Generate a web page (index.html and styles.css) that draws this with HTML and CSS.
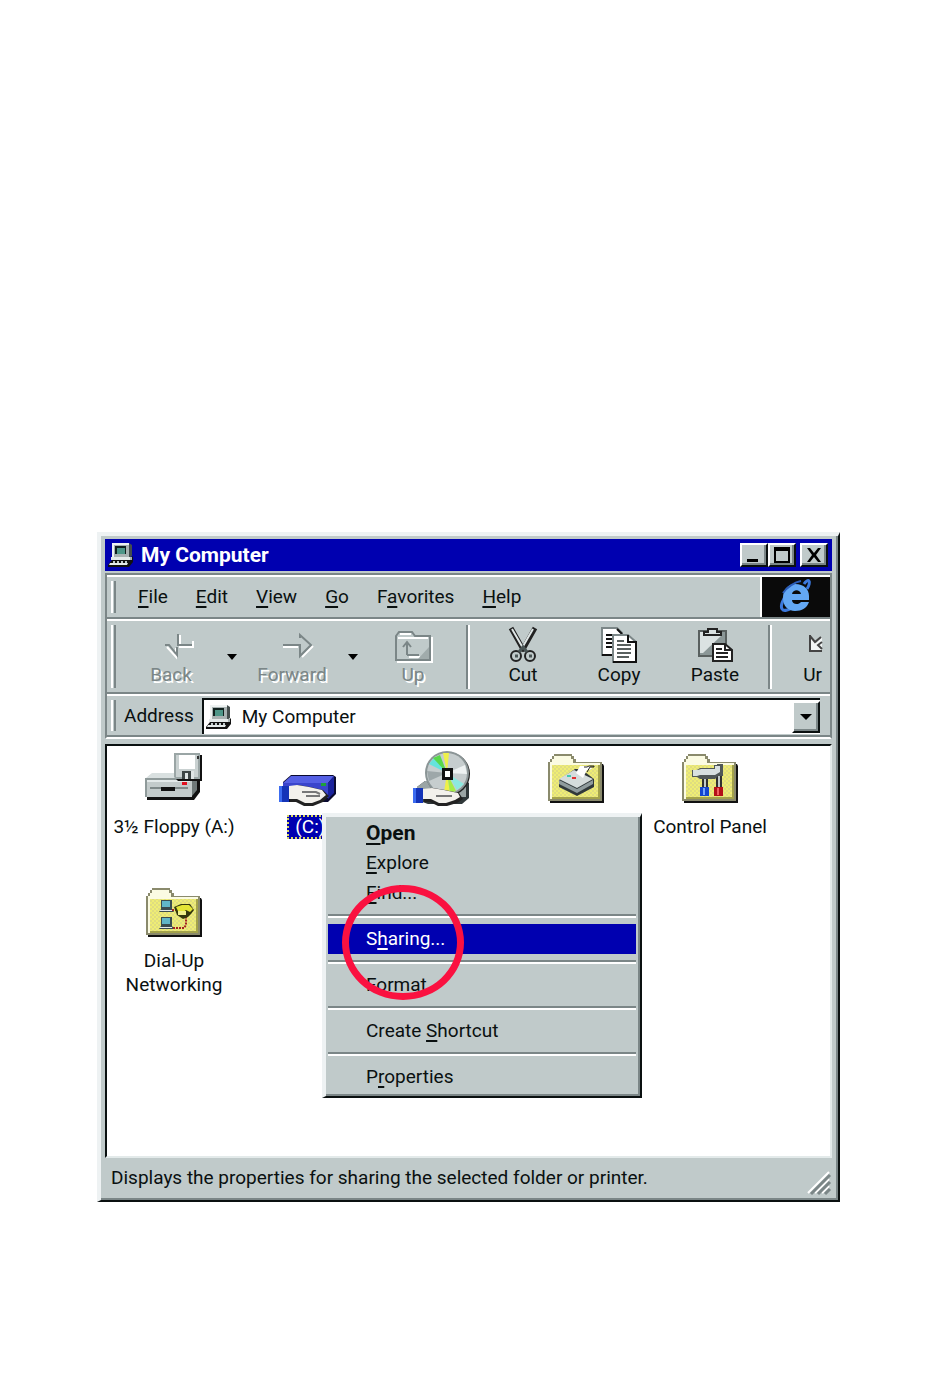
FILE: index.html
```
<!DOCTYPE html>
<html lang="en">
<head>
    <meta charset="UTF-8">
    <meta name="viewport" content="width=device-width, initial-scale=1.0">
    <title>My Computer</title>
    <link rel="stylesheet" href="styles.css">
</head>
<body>
    <svg class="symbols" aria-hidden="true">
        <symbol id="computer" viewBox="0 0 26 26">
            <path d="M5 1h16l3 2v11l-3 2H5z" fill="#444d4d"/>
            <path d="M4 1h17v14H4z" fill="#eef2f2"/>
            <path d="M6 3h15v12H6z" fill="#a8b2b2"/>
            <path d="M7 4h11v8H7z" fill="#10201e"/>
            <path d="M9 6h8v6H9z" fill="#4d9688"/>
            <path d="M4 16h19l2-2v6l-4 5H0v-2l4-5z" fill="#111"/>
            <path d="M3 15h20v3H3z" fill="#e4eaea"/>
            <path d="M22 15h2v3h-2z" fill="#a8b2b2"/>
            <path d="M2 21h18l-1 2H1z" fill="#e4eaea"/>
            <path d="M5 19h2v2H5zM9 19h2v2H9zM13 19h2v2h-2zM17 19h2v2h-2z" fill="#c0caca"/>
        </symbol>
        <symbol id="folder" viewBox="0 0 60 54">
            <path d="M4 51v-3h50V12h3l1 2v37z" fill="#111"/>
            <path d="M2 49V10h2V7h2V4h2V2h18v2h2v3h2v3h26v39z" fill="#8a8a6c"/>
            <path d="M4 47V10h2V7h2V4h17v3h2v4h27v36z" fill="#fbfbe2"/>
            <path d="M6 13h48v34H6z" fill="#a3a24a"/>
            <path d="M6 13h46v32H6z" fill="url(#dither)"/>
        </symbol>
        <pattern id="dither" width="4" height="4" patternUnits="userSpaceOnUse">
            <path d="M0 0h4v4H0z" fill="#efed74"/>
            <path d="M0 0h2v2H0zM2 2h2v2H2z" fill="#dfdd80"/>
        </pattern>
    </svg>

    <main class="window">
        <header class="title-bar">
            <svg class="small-icon"><use href="#computer"/></svg>
            <h1>My Computer</h1>
            <div class="title-buttons">
                <button class="raised" aria-label="Minimize"><svg viewBox="0 0 18 18"><path d="M2 13h11v3H2z"/></svg></button>
                <button class="raised" aria-label="Maximize"><svg viewBox="0 0 18 18"><path d="M1 1h16v16H1zM3 5v10h12V5z" fill-rule="evenodd"/></svg></button>
                <button class="raised close" aria-label="Close"><svg viewBox="0 0 18 18"><path d="M2 2h3l4 5 4-5h3l-5 7 5 7h-3l-4-5-4 5H2l5-7z"/></svg></button>
            </div>
        </header>

        <div class="bars">
            <div class="band menu-band">
                <span class="grip"></span>
                <nav class="menu-bar">
                    <button><u>F</u>ile</button>
                    <button><u>E</u>dit</button>
                    <button><u>V</u>iew</button>
                    <button><u>G</u>o</button>
                    <button>F<u>a</u>vorites</button>
                    <button><u>H</u>elp</button>
                </nav>
                <div class="logo">
                    <svg viewBox="0 0 34 36">
                        <path d="M25 5c2-3 4-4 5-3s0 5-2 8M8 15C4 20 1 27 3 30s6 1 10-1" fill="none" stroke="#3b78dc" stroke-width="3"/>
                        <path d="M16 5c9 0 14 5 14 12v4H13c0 5 7 5 9 2h8c-2 6-7 9-14 9C9 32 4 27 4 19S9 5 16 5zm-3 10h9c-1-5-8-5-9 0z" fill="#63a8f4" fill-rule="evenodd"/>
                        <path d="M4 14C8 8 16 3 22 2" fill="none" stroke="#2a5cb8" stroke-width="2"/>
                    </svg>
                </div>
            </div>

            <div class="band tool-band">
                <span class="grip"></span>
                <div class="tools">
                    <button class="tool" disabled>
                        <svg viewBox="0 0 36 36">
                            <path d="M27 8v12h13v-6M14 20l9 10v-9" fill="none" stroke="#fff" stroke-width="2"/>
                            <path d="M25 7v11h14M12 18h4l8 10v-8" fill="none" stroke="#7b8687" stroke-width="2"/>
                        </svg>
                        <span>Back</span>
                    </button>
                    <button class="drop" disabled aria-label="Back history"><svg viewBox="0 0 10 6"><path d="M0 0h10L5 6z"/></svg></button>
                    <button class="tool" disabled>
                        <svg viewBox="0 0 36 36">
                            <path d="M9 20h15M28 30l11-11" fill="none" stroke="#fff" stroke-width="2"/>
                            <path d="M9 18h17v11l11-11L26 8v3" fill="none" stroke="#7b8687" stroke-width="2"/>
                        </svg>
                        <span>Forward</span>
                    </button>
                    <button class="drop" disabled aria-label="Forward history"><svg viewBox="0 0 10 6"><path d="M0 0h10L5 6z"/></svg></button>
                    <button class="tool" disabled>
                        <svg viewBox="0 0 36 36">
                            <path d="M2 35h35V10" fill="none" stroke="#fff" stroke-width="2"/>
                            <path d="M1 33V9l3-4h13l3 4h15v24zM12 28V16M8 20l4-5 4 5M12 28h12" fill="none" stroke="#7b8687" stroke-width="2"/>
                            <path d="M3 11h30M14 30h11M5 7h11" stroke="#fff" stroke-width="2"/>
                            <path d="M34 20v12H23z" fill="#a0abab"/>
                        </svg>
                        <span>Up</span>
                    </button>
                    <span class="divider"></span>
                    <button class="tool">
                        <svg viewBox="0 0 36 36">
                            <path d="M6 1l13 23M30 1L17 24" stroke="#222" stroke-width="5"/>
                            <path d="M7 2l11 19M28 2L17 21" stroke="#dfe6e6" stroke-width="2"/>
                            <circle cx="11" cy="29" r="5" fill="#c0caca" stroke="#222" stroke-width="2"/>
                            <circle cx="25" cy="29" r="5" fill="#c0caca" stroke="#222" stroke-width="2"/>
                            <path d="M14 25l4-5 4 5M10 29h3M24 29h3" fill="none" stroke="#4a5555" stroke-width="3"/>
                        </svg>
                        <span>Cut</span>
                    </button>
                    <button class="tool">
                        <svg viewBox="0 0 36 36">
                            <path d="M1 1h15l5 5v22H1z" fill="#fff" stroke="#7b8687" stroke-width="2"/>
                            <path d="M5 8h6M5 12h6M5 16h6M5 20h6" stroke="#111" stroke-width="2"/>
                            <path d="M16 2l5 5M1 28h11" fill="none" stroke="#111" stroke-width="2"/>
                            <path d="M12 8h15l8 7v20H12z" fill="#fff" stroke="#7b8687" stroke-width="2"/>
                            <path d="M27 8v7h8v20H12" fill="none" stroke="#111" stroke-width="2"/>
                            <path d="M16 14h7M16 18h14M16 22h14M16 26h14M16 30h12" stroke="#59605f" stroke-width="2"/>
                        </svg>
                        <span>Copy</span>
                    </button>
                    <button class="tool">
                        <svg viewBox="0 0 36 36">
                            <path d="M2 4h27v25H2z" fill="#8b9797" stroke="#59605f" stroke-width="2"/>
                            <path d="M3 5h22v3L6 26H3z" fill="#dbe2e2"/>
                            <path d="M7 8h17V5h-4V2h-9v3H7z" fill="#d9e0e0" stroke="#222" stroke-width="2"/>
                            <path d="M16 17h12l7 6v11H16z" fill="#fff" stroke="#222" stroke-width="2"/>
                            <path d="M28 17v6h7M19 22h6M19 26h12M19 30h12" fill="none" stroke="#222" stroke-width="2"/>
                        </svg>
                        <span>Paste</span>
                    </button>
                    <span class="divider"></span>
                    <button class="tool partial">
                        <svg viewBox="0 0 14 36">
                            <path d="M2 9l6 7 6-6v15H2z" fill="#f2f5f5"/>
                            <path d="M2 8v16h12M2 9l5 6 6-5M14 15l-4 3 4 4" fill="none" stroke="#444" stroke-width="2"/>
                        </svg>
                        <span>Ur</span>
                    </button>
                </div>
            </div>

            <div class="band address-band">
                <span class="grip"></span>
                <label for="address">Address</label>
                <div class="address">
                    <svg class="small-icon"><use href="#computer"/></svg>
                    <select id="address">
                        <option>My Computer</option>
                    </select>
                    <span class="raised arrow"><svg viewBox="0 0 12 6"><path d="M0 0h12L6 6z"/></svg></span>
                </div>
            </div>
        </div>

        <section class="files">
            <a class="file" href="#">
                <svg viewBox="0 0 60 54">
                    <path d="M3 48V26l6-5h44l3 3v16l-6 8H3z" fill="#111"/>
                    <path d="M2 26l6-5h44l-5 5z" fill="#d9e0e0"/>
                    <path d="M2 26h46v19H2z" fill="#c3cbcb"/>
                    <path d="M48 26l5-5v17l-5 6z" fill="#6f7979"/>
                    <path d="M1 26h47v2H3v17H1z" fill="#8f9a9a"/>
                    <path d="M3 28h43v2H3z" fill="#e4eaea"/>
                    <path d="M6 35h38v2H6z" fill="#7f8989"/>
                    <path d="M17 35h14v4H17z" fill="#111"/>
                    <path d="M32 3h26v26H34l-2-2z" fill="#111"/>
                    <path d="M30 1h26v26H32l-2-2z" fill="#9aa5a5"/>
                    <path d="M32 3h22v22H32z" fill="#c9d1d1"/>
                    <path d="M35 3h16v14H35z" fill="#fff"/>
                    <path d="M38 19h12v8H38z" fill="#3d4545"/>
                    <path d="M41 21h3v6h-3zM47 19h3v8h-3z" fill="#dfe5e5"/>
                    <path d="M53 4h2v3h-2z" fill="#333"/>
                    <path d="M38 30h5v3h-5z" fill="#e01020"/>
                </svg>
                <span>3½ Floppy (A:)</span>
            </a>
            <a class="file selected" href="#">
                <svg viewBox="0 0 60 54">
                    <path d="M5 46V30l8-7h42l3 2v17l-8 8H10z" fill="#0a0a30"/>
                    <path d="M5 31l8-7h43l-6 7z" fill="#5560e4"/>
                    <path d="M5 31h45v15H5z" fill="#3a45cc"/>
                    <path d="M50 31l6-7v17l-6 6z" fill="#1a229c"/>
                    <path d="M43 31h5v3h-5z" fill="#1ea03c"/>
                    <path d="M12 35l8-2 12 2 13 3 6 6-6 6-10 4h-9l-8-4h-6z" fill="#222"/>
                    <path d="M11 34l8-1 12 2 13 3 4 5-6 5-8 3h-7l-8-4h-8z" fill="#f3f1ec"/>
                    <path d="M24 40h14l4 2M28 44h14" fill="none" stroke="#777" stroke-width="2"/>
                    <path d="M1 34h10v16H1z" fill="#1434b8"/>
                    <path d="M1 34h3v16H1z" fill="#3c6cf0"/>
                </svg>
                <span>&nbsp;(C:)</span>
            </a>
            <a class="file" href="#">
                <svg viewBox="0 0 60 54">
                    <path d="M5 48V35l8-6h40l4 2v15l-7 6H16z" fill="#30383a"/>
                    <path d="M5 35l8-6h41v16H5z" fill="#9ba5a5"/>
                    <circle cx="36" cy="22" r="22" fill="#222"/>
                    <circle cx="35" cy="21" r="22" fill="#8b9596"/>
                    <circle cx="35" cy="21" r="20" fill="#c6cdce"/>
                    <path d="M35 21L17 12l6-7z" fill="#66e3dc"/>
                    <path d="M35 21L21 6l7-3z" fill="#58d84b"/>
                    <path d="M35 21L31 1h6z" fill="#eef04a"/>
                    <path d="M35 21l18-8 2 9z" fill="#eef2f2"/>
                    <path d="M35 21l3 20-6-1z" fill="#eef04a"/>
                    <path d="M35 21l9 18-6 2z" fill="#a4ec48"/>
                    <path d="M35 21l17 11-7 6z" fill="#8ce9df"/>
                    <path d="M35 21l-18 8-2-10z" fill="#9da7a9"/>
                    <path d="M30 16h11v12H30z" fill="#111"/>
                    <path d="M33 19h5v6h-5z" fill="#fff"/>
                    <path d="M12 38l9-2 12 2 14 3 4 6-6 4-10 3h-9l-8-4h-6z" fill="#222"/>
                    <path d="M11 37l9-1 12 2 14 3 2 4-5 3-9 3h-7l-8-4h-8z" fill="#f3f1ec"/>
                    <path d="M24 44h16" stroke="#777" stroke-width="2"/>
                    <path d="M1 36h10v15H1z" fill="#1434b8"/>
                    <path d="M1 36h3v15H1z" fill="#3c6cf0"/>
                </svg>
                <span>(D:)</span>
            </a>
            <a class="file" href="#">
                <svg viewBox="0 0 60 54">
                    <use href="#folder"/>
                    <path d="M13 28l16-11h6l13 10v8L31 44 13 35z" fill="#30383a"/>
                    <path d="M13 27l15-9 19 9-16 9z" fill="#d5dcdc"/>
                    <path d="M13 28l18 9v4l-18-9zM31 37l16-9v4l-16 9z" fill="#8f9b9d"/>
                    <path d="M30 21l4-7h10l2 3-5 1-4 8z" fill="#fff"/>
                    <path d="M38 15h3l2-1h5v1h-4l-3 5" fill="none" stroke="#222"/>
                    <path d="M21 23h4v2h-4z" fill="#42c9b0"/>
                    <path d="M26 25h4v2h-4z" fill="#e03030"/>
                </svg>
                <span>Printers</span>
            </a>
            <a class="file" href="#">
                <svg viewBox="0 0 60 54">
                    <use href="#folder"/>
                    <path d="M22 24h6v14h-6zM36 24h6v14h-6z" fill="#303030"/>
                    <path d="M24 24h2v12h-2zM38 24h2v12h-2z" fill="#c3cbcb"/>
                    <path d="M12 18h5l3-2h14v-3h3v-1h6v12h-5l-3 3H20l-3-2h-5z" fill="#505858"/>
                    <path d="M13 18h5l3-1h14v-3h5v6l-5 3H20l-3 1h-4z" fill="#d8e0e0"/>
                    <path d="M20 35h9v9h-9z" fill="#1445cf"/>
                    <path d="M23 36h2v7h-2z" fill="#74a4ff"/>
                    <path d="M34 35h9v9h-9z" fill="#b41018"/>
                    <path d="M37 36h2v7h-2z" fill="#f06060"/>
                </svg>
                <span>Control Panel</span>
            </a>
            <a class="file" href="#">
                <svg viewBox="0 0 60 54">
                    <use href="#folder"/>
                    <path d="M17 14h11v9l2 3H15l2-3zM17 31h11v9l2 3H15l2-3z" fill="#3b4c50"/>
                    <path d="M18 15h8v6h-8zM18 32h8v6h-8z" fill="#61b6c8"/>
                    <path d="M16 24h12v1H16zM16 41h12v1H16z" fill="#e4eaea"/>
                    <path d="M28 24h5M29 42h11l2-3v-8" fill="none" stroke="#a42222" stroke-width="2" stroke-dasharray="2 1"/>
                    <path d="M30 21l7-3h9l4 6-3 4-3 3-5 2-6-4z" fill="#33370c"/>
                    <path d="M32 21l6-2h7l4 4-3 3-4-2-4 3-4-2z" fill="#e4e536"/>
                    <path d="M34 25h8v4h-8z" fill="#f0ef8a"/>
                </svg>
                <span>Dial-Up Networking</span>
            </a>
        </section>

        <footer class="status-bar">
            <span>Displays the properties for sharing the selected folder or printer.</span>
            <svg viewBox="0 0 22 22">
                <path d="M0 21L21 0M7 21L21 7M14 21l7-7" stroke="#fff" stroke-width="2"/>
                <path d="M3 22L22 3M10 22l12-12M17 22l5-5" stroke="#7b8687" stroke-width="3"/>
            </svg>
        </footer>

        <div class="context-menu">
            <button class="default"><u>O</u>pen</button>
            <button><u>E</u>xplore</button>
            <button><u>F</u>ind...</button>
            <hr>
            <button class="active">S<u>h</u>aring...</button>
            <hr>
            <button>Format</button>
            <hr>
            <button>Create <u>S</u>hortcut</button>
            <hr>
            <button>P<u>r</u>operties</button>
            <span class="marker"></span>
        </div>
    </main>
</body>
</html>
```

FILE: styles.css
```
* {
    box-sizing: border-box;
}

body {
    margin: 0;
    padding: 532px 110px 176px 97px;
    background-color: #fff;
    color: #0a1010;
    font-family: Roboto, "Liberation Sans", Arial, sans-serif;
    font-size: 19px;
    line-height: 24px;
}

button, select {
    margin: 0;
    padding: 0;
    border: none;
    border-radius: 0;
    background: none;
    color: inherit;
    font: inherit;
}

u {
    text-decoration-thickness: 2px;
    text-underline-offset: 3px;
}

svg {
    display: block;
    flex: none;
    overflow: visible;
}

.symbols {
    position: absolute;
    width: 0;
    height: 0;
}

.window {
    position: relative;
    padding: 3px 6px 2px 4px;
    background-color: #c0caca;
    border: 4px solid;
    border-width: 4px 2px 2px 4px;
    border-color: #eef2f3 #0a1010 #0a1010 #eef2f3;
    box-shadow: inset -2px -2px #7b8687;
}

.raised {
    display: flex;
    align-items: center;
    justify-content: center;
    background-color: #c0caca;
    border: 2px solid;
    border-color: #fff #0a1010 #0a1010 #fff;
    box-shadow: inset -2px -2px #7b8687;
}

.small-icon {
    width: 26px;
    height: 26px;
}

/* title bar */
.title-bar {
    display: flex;
    align-items: center;
    height: 32px;
    padding: 0 4px 0 3px;
    background-color: #0000b0;
    color: #fff;
}

.title-bar h1 {
    flex: 1;
    margin: 0 0 0 7px;
    font-size: 21px;
}

.title-buttons {
    display: flex;
}

.title-buttons button {
    width: 28px;
    height: 24px;
    color: #0a1010;
}

.title-buttons svg {
    width: 18px;
    height: 18px;
}

.title-buttons .close {
    margin-left: 4px;
}

/* toolbars */
.bars {
    margin-top: 2px;
    border: 2px solid #7b8687;
    border-bottom-color: #fff;
}

.band {
    display: flex;
    align-items: center;
    padding-left: 4px;
    border-top: 2px solid #fff;
    border-bottom: 2px solid #7b8687;
}

.grip {
    flex: none;
    align-self: stretch;
    width: 5px;
    margin: 4px 0;
    border-left: 2px solid #fff;
    border-right: 2px solid #7b8687;
}

.menu-band {
    height: 44px;
}

.menu-bar {
    display: flex;
    flex: 1;
    gap: 28px;
    padding-left: 22px;
}

.logo {
    display: flex;
    align-items: center;
    justify-content: center;
    width: 70px;
    height: 40px;
    background-color: #0a0a0a;
    border-left: 2px solid #fff;
}

.logo svg {
    width: 34px;
    height: 36px;
}

.tool-band {
    height: 75px;
    padding-right: 8px;
}

.tools {
    display: flex;
    flex: 1;
    min-width: 0;
    height: 64px;
    padding-left: 7px;
}

.tool {
    flex: none;
    width: 96px;
}

.tool svg {
    width: 36px;
    height: 36px;
    margin: 0 auto;
}

.tool span {
    display: block;
}

.tool:disabled {
    color: #7b8687;
    text-shadow: 2px 2px #fff;
}

.tool.partial {
    flex: 1;
    width: auto;
    text-align: right;
}

.tool.partial svg {
    width: 14px;
    margin-right: 0;
}

.drop {
    flex: none;
    width: 25px;
}

.drop svg {
    width: 10px;
    height: 6px;
    margin: 0 auto;
}

.divider {
    flex: none;
    width: 4px;
    margin: 0 5px;
    border-left: 2px solid #7b8687;
    border-right: 2px solid #fff;
}

.address-band {
    height: 43px;
    padding-right: 10px;
}

.address-band label {
    padding: 0 8px;
}

.address {
    display: flex;
    flex: 1;
    align-items: center;
    height: 36px;
    padding-left: 2px;
    background-color: #fff;
    border-top: 2px solid #0a1010;
    border-left: 2px solid #0a1010;
}

.address select {
    flex: 1;
    height: 30px;
    padding-left: 10px;
    appearance: none;
}

.arrow {
    width: 28px;
    height: 32px;
}

.arrow svg {
    width: 12px;
    height: 6px;
}

/* file area */
.files {
    display: grid;
    grid-template-columns: repeat(auto-fill, 134px);
    grid-auto-rows: 134px;
    height: 414px;
    margin-top: 5px;
    padding-top: 6px;
    background-color: #fff;
    border: 2px solid;
    border-color: #0a1010 #e3eaea #e3eaea #0a1010;
}

.file {
    color: inherit;
    text-align: center;
    text-decoration: none;
}

.file svg {
    width: 60px;
    height: 54px;
    margin: 0 auto 9px;
}

.file span {
    display: inline-block;
    padding: 0 4px;
}

.file.selected span {
    background-color: #0000b0;
    color: #fff;
    outline: 2px dotted #d8d860;
    outline-offset: -2px;
}

.status-bar {
    display: flex;
    align-items: center;
    justify-content: space-between;
    height: 40px;
    padding: 0 2px 0 6px;
}

.status-bar svg {
    width: 22px;
    height: 22px;
    align-self: flex-end;
    margin-bottom: 4px;
}

/* right-click menu over the file area */
.context-menu {
    position: absolute;
    top: 277px;
    left: 221px;
    width: 320px;
    padding: 1px 4px 4px 2px;
    background-color: #c0caca;
    border: 4px solid;
    border-width: 4px 2px 2px 4px;
    border-color: #eef2f3 #0a1010 #0a1010 #eef2f3;
    box-shadow: inset -2px -2px #7b8687;
}

.context-menu button {
    display: block;
    width: 100%;
    height: 30px;
    padding-left: 38px;
    text-align: left;
}

.context-menu .default {
    font-size: 21px;
    font-weight: bold;
}

.context-menu .active {
    background-color: #0000b0;
    color: #fff;
}

.context-menu hr {
    height: 4px;
    margin: 6px 0;
    border: none;
    border-top: 2px solid #7b8687;
    border-bottom: 2px solid #fff;
}

.marker {
    position: absolute;
    top: 68px;
    left: 16px;
    width: 122px;
    height: 115px;
    border: 7px solid #fa1140;
    border-radius: 50%;
    pointer-events: none;
}
```
